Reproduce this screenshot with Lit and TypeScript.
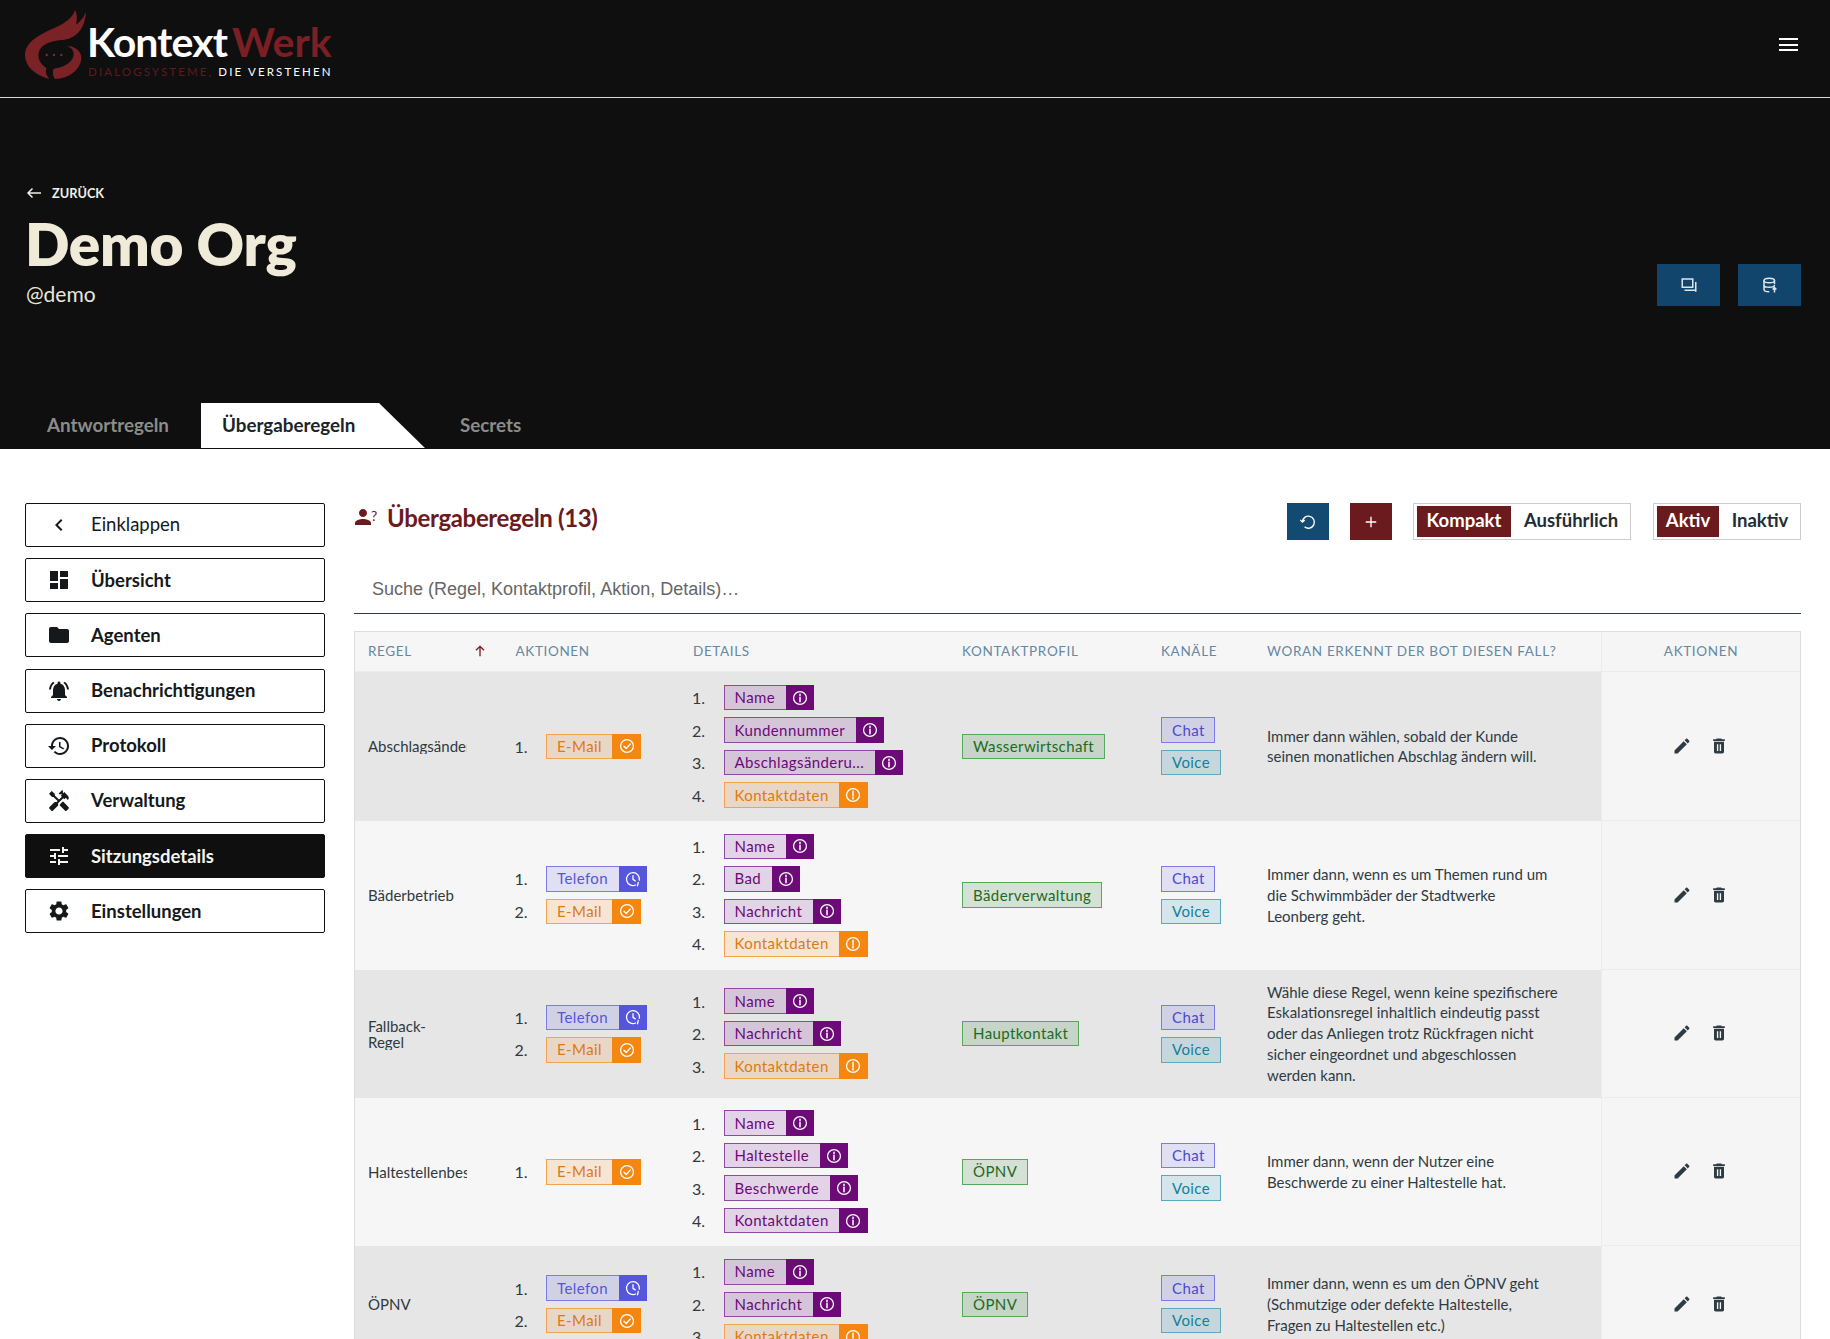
import { LitElement, html, css, svg } from "lit";
import { customElement } from "lit/decorators.js";

const P: Record<string, string> = {
  chevron: "M15.41 7.41L14 6l-6 6 6 6 1.41-1.41L10.83 12z",
  dashboard: "M3 13h8V3H3v10zm0 8h8v-6H3v6zm10 0h8V11h-8v10zm0-18v6h8V3h-8z",
  folder: "M10 4H4c-1.1 0-1.99.9-1.99 2L2 18c0 1.1.9 2 2 2h16c1.1 0 2-.9 2-2V8c0-1.1-.9-2-2-2h-8l-2-2z",
  bell: "M7.58 4.08L6.15 2.65C3.75 4.48 2.17 7.3 2.03 10.5h2c.15-2.65 1.51-4.97 3.55-6.42zm12.39 6.42h2c-.15-3.2-1.73-6.02-4.12-7.85l-1.42 1.43c2.02 1.45 3.39 3.77 3.54 6.42zM18 11c0-3.07-1.64-5.64-4.5-6.32V4c0-.83-.67-1.5-1.5-1.5s-1.5.67-1.5 1.5v.68C7.63 5.36 6 7.92 6 11v5l-2 2v1h16v-1l-2-2v-5zm-6 11c.14 0 .27-.01.4-.04.65-.14 1.18-.58 1.44-1.18.1-.24.15-.5.15-.78h-4c.01 1.1.9 2 2.01 2z",
  history: "M13 3c-4.97 0-9 4.03-9 9H1l3.89 3.89.07.14L9 12H6c0-3.87 3.13-7 7-7s7 3.13 7 7-3.13 7-7 7c-1.93 0-3.68-.79-4.94-2.06l-1.42 1.42C8.27 19.99 10.51 21 13 21c4.97 0 9-4.03 9-9s-4.03-9-9-9zm-1 5v5l4.28 2.54.72-1.21-3.5-2.08V8H12z",
  tools: "M21.67 18.17l-5.3-5.3h-.99l-2.54 2.54v.99l5.3 5.3c.39.39 1.02.39 1.41 0l2.12-2.12c.39-.38.39-1.02 0-1.41zM17.34 10.19l1.41-1.41 2.12 2.12c1.17-1.17 1.17-3.07 0-4.24l-3.54-3.54-1.41 1.41V1.71l-.7-.71-3.54 3.54.71.71h2.83l-1.41 1.41 1.06 1.06-2.89 2.89-4.13-4.13V5.06L4.83 2.04 2 4.87 5.03 7.9h1.41l4.13 4.13-.85.85H7.61l-5.3 5.3c-.39.39-.39 1.02 0 1.41l2.12 2.12c.39.39 1.02.39 1.41 0l5.3-5.3v-2.12l5.15-5.15 1.05 1.05z",
  tune: "M3 17v2h6v-2H3zM3 5v2h10V5H3zm10 16v-2h8v-2h-8v-2h-2v6h2zM7 9v2H3v2h4v2h2V9H7zm14 4v-2H11v2h10zm-6-4h2V7h4V5h-4V3h-2v6z",
  gear: "M19.14 12.94c.04-.3.06-.61.06-.94 0-.32-.02-.64-.07-.94l2.03-1.58c.18-.14.23-.41.12-.61l-1.92-3.32c-.12-.22-.37-.29-.59-.22l-2.39.96c-.5-.38-1.03-.7-1.62-.94l-.36-2.54c-.04-.24-.24-.41-.48-.41h-3.84c-.24 0-.43.17-.47.41l-.36 2.54c-.59.24-1.13.57-1.62.94l-2.39-.96c-.22-.08-.47 0-.59.22L2.74 8.87c-.12.21-.08.47.12.61l2.03 1.58c-.05.3-.09.63-.09.94s.02.64.07.94l-2.03 1.58c-.18.14-.23.41-.12.61l1.92 3.32c.12.22.37.29.59.22l2.39-.96c.5.38 1.03.7 1.62.94l.36 2.54c.05.24.24.41.48.41h3.84c.24 0 .44-.17.47-.41l.36-2.54c.59-.24 1.13-.56 1.62-.94l2.39.96c.22.08.47 0 .59-.22l1.92-3.32c.12-.22.07-.47-.12-.61l-2.01-1.58zM12 15.6c-1.98 0-3.6-1.62-3.6-3.6s1.62-3.6 3.6-3.6 3.6 1.62 3.6 3.6-1.62 3.6-3.6 3.6z",
  edit: "M3 17.25V21h3.75L17.81 9.94l-3.75-3.75L3 17.25zM20.71 7.04c.39-.39.39-1.02 0-1.41l-2.34-2.34c-.39-.39-1.02-.39-1.41 0l-1.83 1.83 3.75 3.75 1.83-1.83z",
  trash: "M19 4h-3.5l-1-1h-5l-1 1H5v2h14V4zM6 7v12c0 1.1.9 2 2 2h8c1.1 0 2-.9 2-2V7H6zm3.5 3h1.6v8H9.5v-8zm3.4 0h1.6v8h-1.6v-8z",
  person: "M9 12c2.2 0 4-1.8 4-4s-1.8-4-4-4-4 1.8-4 4 1.8 4 4 4zm0 2c-2.7 0-8 1.3-8 4v2h16v-2c0-2.7-5.3-4-8-4z",
};

const icon = (k: string) => html`<svg class="ic" viewBox="0 0 24 24"><path fill="currentColor" fill-rule="evenodd" d=${P[k]}></path></svg>`;

const miniIcon = (k: string) => {
  const inner =
    k === "info"
      ? svg`<circle cx="12" cy="12" r="8.6"/><path d="M12 11v6M12 7v1.800" stroke-width="2"/>`
      : k === "alert"
      ? svg`<circle cx="12" cy="12" r="8.6"/><path d="M12 7v6.400M12 15.400v1.800" stroke-width="2"/>`
      : k === "check"
      ? svg`<circle cx="12" cy="12" r="8.6"/><path d="M8 12.400l3 3 5.400-6"/>`
      : svg`<path d="M15.500 20A8.600 8.600 0 1 1 20.500 13.500"/><path d="M12 7.500v5l3 2"/><path d="M19 16.500l-1 4.500"/>`;
  return html`<svg class="mini" viewBox="0 0 24 24" fill="none" stroke="currentColor" stroke-width="1.7" stroke-linecap="round" stroke-linejoin="round">${inner}</svg>`;
};

type Chip = [string, string, string];
const N: Chip = ["Name", "purple", "info"];
const NA: Chip = ["Nachricht", "purple", "info"];
const KO: Chip = ["Kontaktdaten", "orange", "alert"];
const KP: Chip = ["Kontaktdaten", "purple", "info"];
const TEL: Chip = ["Telefon", "blue", "clock"];
const MAIL: Chip = ["E-Mail", "orange", "check"];

interface Row {
  rule: unknown;
  actions: Chip[];
  details: Chip[];
  profile: string;
  text: string;
}

const ROWS: Row[] = [
  { rule: "Abschlagsänderung", actions: [MAIL], details: [N, ["Kundennummer", "purple", "info"], ["Abschlagsänderu...", "purple", "info"], KO], profile: "Wasserwirtschaft", text: "Immer dann wählen, sobald der Kunde seinen monatlichen Abschlag ändern will." },
  { rule: "Bäderbetrieb", actions: [TEL, MAIL], details: [N, ["Bad", "purple", "info"], NA, KO], profile: "Bäderverwaltung", text: "Immer dann, wenn es um Themen rund um die Schwimmbäder der Stadtwerke Leonberg geht." },
  { rule: html`Fallback-<br />Regel`, actions: [TEL, MAIL], details: [N, NA, KO], profile: "Hauptkontakt", text: "Wähle diese Regel, wenn keine spezifischere Eskalationsregel inhaltlich eindeutig passt oder das Anliegen trotz Rückfragen nicht sicher eingeordnet und abgeschlossen werden kann." },
  { rule: "Haltestellenbeschwerde", actions: [MAIL], details: [N, ["Haltestelle", "purple", "info"], ["Beschwerde", "purple", "info"], KP], profile: "ÖPNV", text: "Immer dann, wenn der Nutzer eine Beschwerde zu einer Haltestelle hat." },
  { rule: "ÖPNV", actions: [TEL, MAIL], details: [N, NA, KO], profile: "ÖPNV", text: "Immer dann, wenn es um den ÖPNV geht (Schmutzige oder defekte Haltestelle, Fragen zu Haltestellen etc.)" },
];

const NAV: [string, string][] = [
  ["dashboard", "Übersicht"],
  ["folder", "Agenten"],
  ["bell", "Benachrichtigungen"],
  ["history", "Protokoll"],
  ["tools", "Verwaltung"],
  ["tune", "Sitzungsdetails"],
  ["gear", "Einstellungen"],
];

@customElement("app-root")
export class AppRoot extends LitElement {
  static styles = css`
    :host {
      display: block;
      height: 100vh;
      overflow: hidden;
      background: #fff;
      font-family: Lato, "Noto Sans", sans-serif;
      color: #2e3a40;
    }
    * { box-sizing: border-box; }
    .ic { width: 24px; height: 24px; display: block; flex: none; }
    .appbar {
      height: 98px;
      background: #0f0f10;
      border-bottom: 1px solid #d8d8d8;
      display: flex;
      align-items: center;
      justify-content: space-between;
      padding: 0 32px 0 20px;
    }
    .logo { display: flex; align-items: center; height: 80px; margin-top: -7px; }
    .flame { width: 100px; height: 80px; display: block; margin-right: -33px; flex: none; }
    .logotext { padding-top: 11px; }
    .wordmark { font-size: 41px; font-weight: 700; line-height: 40px; letter-spacing: -.9px; color: #fff; white-space: nowrap; margin-top: -1px; }
    .wordmark span { color: #7a1f24; margin-left: 5px; letter-spacing: 0; }
    .tagline { font-size: 11.5px; letter-spacing: 2.13px; line-height: 14px; color: #fff; white-space: nowrap; margin-top: 3px; padding-left: 1px; }
    .tagline span { color: #5e1a22; }
    .burger { width: 19px; height: 13px; display: flex; flex-direction: column; justify-content: space-between; margin-top: -8px; }
    .burger i { display: block; height: 2px; background: #fff; }

    .hero { height: 351px; background: #0f0f10; display: flex; flex-direction: column; }
    .heromain { flex: 1; display: flex; justify-content: space-between; padding: 86px 29px 0 26px; }
    .back { display: flex; align-items: center; gap: 10px; font-size: 12.8px; font-weight: 700; color: #efefe6; height: 18px; }
    .back svg { width: 16px; height: 12px; }
    h1 { margin: 8px 0 0 -1px; font-size: 58.5px; font-weight: 800; line-height: 66px; color: #efebd8; letter-spacing: -.3px; }
    .handle { font-size: 21px; font-weight: 400; line-height: 26px; color: #e8e6dc; margin-top: 5px; }
    .herobtns { display: flex; gap: 18px; padding-top: 80px; }
    .herobtn { width: 63px; height: 42px; background: #12456b; display: flex; align-items: center; justify-content: center; color: #dfe7e8; }
    .herobtn svg { width: 18px; height: 18px; }
    .tabs { height: 46px; display: flex; padding-left: 26px; padding-bottom: 3px; font-size: 18.8px; font-weight: 700; color: #8c8c88; }
    .tab { display: flex; align-items: center; padding: 0 32px 0 21px; }
    .tab.on { background: #fff; color: #1a2429; margin-bottom: -2px; padding-bottom: 2px; padding-right: 68px; width: 224px; clip-path: polygon(0 0, calc(100% - 46px) 0, 100% 100%, 0 100%); }
    .tab.sec { padding-left: 35px; }

    .body { display: flex; gap: 29px; padding: 54px 29px 0 25px; }
    .side { width: 300px; flex: none; display: flex; flex-direction: column; gap: 11.2px; }
    .nav { height: 44px; border: 1px solid #111; border-radius: 2px; display: flex; align-items: center; padding: 0 0 1px 21px; gap: 20px; font-size: 18.5px; font-weight: 700; color: #15191b; }
    .nav .ic { margin-top: 1px; }
    .nav.light { font-weight: 400; padding-bottom: 2px; }
    .nav.on { background: #0f0f10; color: #f4f4ee; }
    .main { flex: 1; min-width: 0; }
    .toolbar { height: 37px; display: flex; align-items: center; }
    .title { display: flex; align-items: center; color: #6b1a1e; font-size: 24px; font-weight: 700; letter-spacing: -.35px; margin-right: auto; margin-top: -9px; }
    .titleic { position: relative; width: 33px; height: 24px; display: block; }
    .titleic svg { position: absolute; left: 0; top: 0; }
    .titleic b { position: absolute; left: 17px; top: 4px; font-size: 14px; font-weight: 400; line-height: 14px; }
    .sq { width: 42px; height: 37px; display: flex; align-items: center; justify-content: center; color: #fff; margin-right: 21px; }
    .sq.blue { background: #134a72; }
    .sq.red { background: #6b1a1e; }
    .sq svg { width: 18px; height: 18px; }
    .seg { height: 37px; border: 1px solid #ccc; padding: 2px 3px; display: flex; font-size: 18.5px; font-weight: 700; color: #1f2e36; }
    .seg span { display: flex; align-items: center; justify-content: center; padding-bottom: 3px; }
    .seg .a { background: #6b1a1e; color: #fff; }
    .seg .b { padding-left: 4px; }
    .seg1 { width: 218px; margin-right: 22px; }
    .seg1 .a { width: 94px; }
    .seg1 .b { flex: 1; }
    .seg2 { width: 148px; }
    .seg2 .a { width: 62px; }
    .seg2 .b { flex: 1; }
    .search { height: 47px; margin-top: 26.5px; border-bottom: 1px solid #2f3d45; padding-left: 18px; display: flex; align-items: center; font-family: "Liberation Sans", Arial, sans-serif; font-size: 18px; color: #666; }
    .table { margin-top: 17.5px; border: 1px solid #ddd; border-bottom: 0; }
    .row { display: grid; grid-template-columns: 146.5px 177.5px 269px 199px 106px 348px 199px; }
    .head { height: 40px; background: #f7f6f7; border-bottom: 1px solid #ececec; font-size: 13.5px; letter-spacing: .65px; color: #6389a3; text-transform: uppercase; padding-bottom: 2px; }
    .head > div { display: flex; align-items: center; padding-left: 14px; white-space: nowrap; }
    .head > .sort { justify-content: space-between; padding-left: 13px; padding-right: 14px; }
    .head .sort svg { width: 16px; height: 16px; color: #7a1c20; }
    .head .last { justify-content: center; padding-left: 0; background: #f5f5f6; border-left: 1px solid #ececec; margin-bottom: -2px; padding-bottom: 2px; }
    .tr { background: #f7f6f7; }
    .tr.odd { background: #e6e6e7; }
    .tr > div { padding: 12.9px 0 12.9px 14px; display: flex; align-items: center; min-width: 0; }
    .tr > .rule { padding-left: 13px; }
    .tr > .desc { padding-top: 12px; padding-bottom: 12px; }
    .rulename { width: 99px; overflow: hidden; white-space: nowrap; font-size: 15px; line-height: 16px; color: #2e3a40; }
    .list { display: grid; grid-template-columns: 30.5px auto; row-gap: 7px; align-items: center; justify-items: start; font-size: 16px; color: #2e3a40; }
    .num { margin-left: -1px; }
    .stack { display: flex; flex-direction: column; gap: 7px; align-items: flex-start; }
    .chip { display: inline-flex; align-items: stretch; height: 25.5px; border: 1px solid var(--b); background: var(--bg); color: var(--t); font-size: 15px; letter-spacing: .4px; white-space: nowrap; }
    .chip .lbl { padding: 0 10.500px 0 10px; display: flex; align-items: center; margin-top: -1px; }
    .chip.tag .lbl { padding-right: 9.500px; }
    .chip .box { width: 28.5px; margin: -1px -1px -1px 0; background: var(--box); color: #fff; display: flex; align-items: center; justify-content: center; }
    .mini { width: 18px; height: 18px; display: block; }
    .purple { --b: #8d4aa0; --bg: rgba(106, 0, 128, .14); --t: #6a0a78; --box: #6c0a78; }
    .orange { --b: #f5a24d; --bg: rgba(245, 124, 0, .14); --t: #dd7a12; --box: #f5860f; }
    .blue { --b: #7c7ce8; --bg: rgba(83, 83, 220, .14); --t: #5656d6; --box: #5656dd; }
    .green { --b: #56a85a; --bg: rgba(46, 125, 50, .17); --t: #1c6b22; }
    .indigo { --b: #7c7ce8; --bg: rgba(83, 83, 220, .14); --t: #4a4ad0; }
    .teal { --b: #5aa9bd; --bg: rgba(0, 130, 160, .14); --t: #137f99; }
    .tr > .desc { font-size: 15px; line-height: 20.8px; color: #2f3b42; padding-right: 41px; }
    .tr > .acts { padding: 0 2px 0 0; background: #f5f5f6; border-left: 1px solid #ececec; border-bottom: 1px solid #ececec; justify-content: center; gap: 17px; color: #2f3b42; }
    .acts svg { width: 20px; height: 20px; }
  `;

  chip(c: Chip) {
    return html`<span class="chip ${c[1]}"><span class="lbl">${c[0]}</span><span class="box">${miniIcon(c[2])}</span></span>`;
  }
  tag(label: string, cls: string) {
    return html`<span class="chip tag ${cls}"><span class="lbl">${label}</span></span>`;
  }
  list(items: Chip[]) {
    return html`<div class="list">${items.map((c, i) => html`<span class="num">${i + 1}.</span>${this.chip(c)}`)}</div>`;
  }

  render() {
    return html`
      <header class="appbar">
        <div class="logo">
          <svg class="flame" viewBox="0 0 300 240">
            <path fill="#7b2226" d="M165 14C160 35 140 52 105 68C60 88 15 110 15 150C15 185 45 210 88 222C78 210 75 200 80 190C62 178 52 160 56 143C62 118 92 108 125 105C165 102 195 75 198 20C190 40 180 50 168 58C172 42 172 28 165 14Z"></path>
            <path fill="#7b2226" d="M142 124C160 130 165 145 158 160C150 176 130 186 108 190L100 192C98 205 98 214 105 222C145 222 182 195 184 160C185 140 165 122 142 124Z"></path>
            <circle cx="80" cy="150" r="3.500" fill="#8a2a30"></circle><circle cx="102" cy="150" r="3.500" fill="#8a2a30"></circle><circle cx="124" cy="150" r="3.500" fill="#8a2a30"></circle>
          </svg>
          <div class="logotext">
            <div class="wordmark">Kontext<span>Werk</span></div>
            <div class="tagline"><span>DIALOGSYSTEME,</span> DIE VERSTEHEN</div>
          </div>
        </div>
        <div class="burger"><i></i><i></i><i></i></div>
      </header>

      <section class="hero">
        <div class="heromain">
          <div>
            <div class="back">
              <svg viewBox="0 0 16 12" fill="none" stroke="currentColor" stroke-width="1.500"><path d="M15 6H2M6.500 1.500L2 6l4.500 4.500"></path></svg>
              ZURÜCK
            </div>
            <h1>Demo Org</h1>
            <div class="handle">@demo</div>
          </div>
          <div class="herobtns">
            <div class="herobtn">
              <svg viewBox="0 0 24 24" fill="none" stroke="currentColor" stroke-width="2"><path d="M3 4h14v11H3zM21 8v13M6 19h15"></path></svg>
            </div>
            <div class="herobtn">
              <svg viewBox="0 0 24 24" fill="none" stroke="currentColor" stroke-width="2"><ellipse cx="11" cy="6" rx="7" ry="3"></ellipse><path d="M4 6v12c0 1.700 3 3 7 3M18 6v5M4 12c0 1.700 3 3 7 3s7-1 7-3M18 22v-6M15.500 18l2.500-2.500 2.500 2.500"></path></svg>
            </div>
          </div>
        </div>
        <nav class="tabs">
          <div class="tab">Antwortregeln</div>
          <div class="tab on">Übergaberegeln</div>
          <div class="tab sec">Secrets</div>
        </nav>
      </section>

      <div class="body">
        <aside class="side">
          <div class="nav light">${icon("chevron")}Einklappen</div>
          ${NAV.map(([k, l]) => html`<div class="nav ${l === "Sitzungsdetails" ? "on" : ""}">${icon(k)}${l}</div>`)}
        </aside>
        <main class="main">
          <div class="toolbar">
            <div class="title">
              <span class="titleic">${icon("person")}<b>?</b></span>Übergaberegeln (13)
            </div>
            <div class="sq blue">
              <svg viewBox="0 0 24 24" fill="none" stroke="currentColor" stroke-width="1.800"><path d="M4.500 12A8 8 0 1 1 7.500 18.500M1.800 9.200l2.700 3 3-2.700"></path></svg>
            </div>
            <div class="sq red">
              <svg viewBox="0 0 24 24" fill="none" stroke="currentColor" stroke-width="1.800"><path d="M12 5v14M5 12h14"></path></svg>
            </div>
            <div class="seg seg1"><span class="a">Kompakt</span><span class="b">Ausführlich</span></div>
            <div class="seg seg2"><span class="a">Aktiv</span><span class="b">Inaktiv</span></div>
          </div>
          <div class="search">Suche (Regel, Kontaktprofil, Aktion, Details)…</div>
          <div class="table">
            <div class="row head">
              <div class="sort">Regel<svg viewBox="0 0 24 24" fill="none" stroke="currentColor" stroke-width="2"><path d="M12 20V5M6 11l6-6 6 6"></path></svg></div>
              <div>Aktionen</div>
              <div>Details</div>
              <div>Kontaktprofil</div>
              <div>Kanäle</div>
              <div>Woran erkennt der Bot diesen Fall?</div>
              <div class="last">Aktionen</div>
            </div>
            ${ROWS.map(
              (r, i) => html`
                <div class="row tr ${i % 2 === 0 ? "odd" : ""}">
                  <div class="rule"><div class="rulename">${r.rule}</div></div>
                  <div>${this.list(r.actions)}</div>
                  <div>${this.list(r.details)}</div>
                  <div>${this.tag(r.profile, "green")}</div>
                  <div><div class="stack">${this.tag("Chat", "indigo")}${this.tag("Voice", "teal")}</div></div>
                  <div class="desc">${r.text}</div>
                  <div class="acts">${icon("edit")}${icon("trash")}</div>
                </div>
              `
            )}
          </div>
        </main>
      </div>
    `;
  }
}
